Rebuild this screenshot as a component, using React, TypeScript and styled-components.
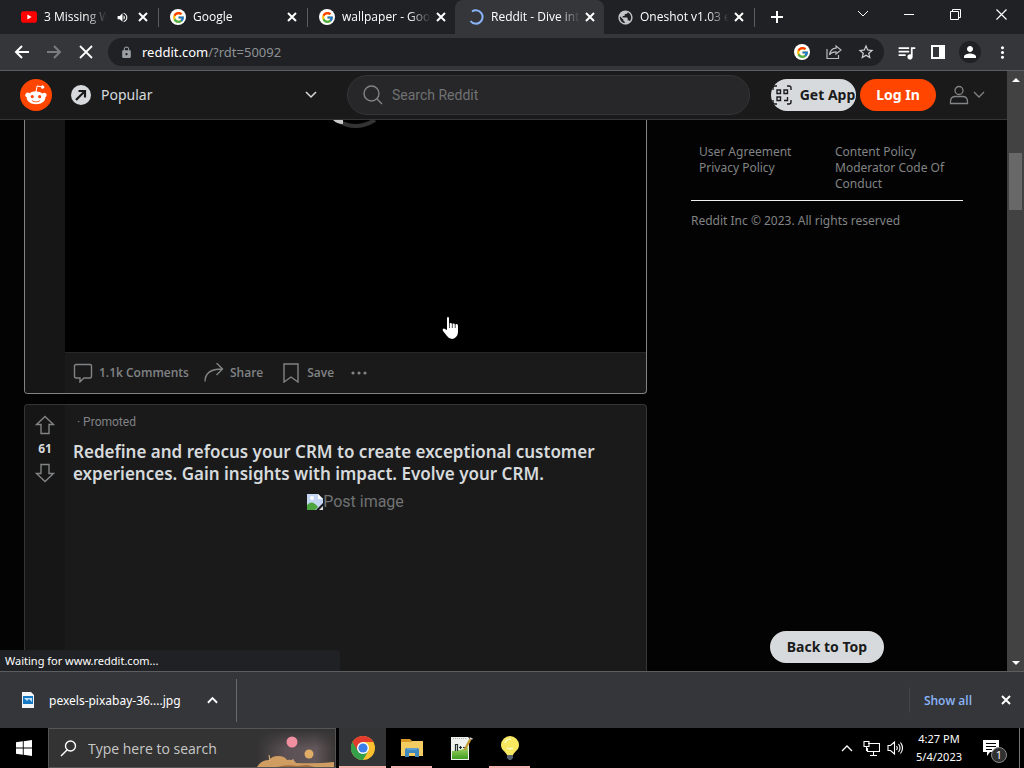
import React from "react";
import styled, { createGlobalStyle, css } from "styled-components";
import { FcGoogle } from "react-icons/fc";
import { MdLock, MdVolumeUp, MdPublic, MdPerson, MdMoreVert, MdQueueMusic, MdStarBorder } from "react-icons/md";

const uiFont = '"Open Sans", "Noto Sans", sans-serif';
const redditFont = '"Noto Sans", "Open Sans", sans-serif';
const plexFont = 'Roboto, "Noto Sans", sans-serif';

const GlobalStyle = createGlobalStyle`
  *, *::before, *::after { box-sizing: border-box; }
  body { margin: 0; background: #000; font-family: ${uiFont}; color: #fff; }
  button { font: inherit; color: inherit; border: 0; padding: 0; margin: 0; background: none; cursor: pointer; }
  a { color: inherit; text-decoration: none; }
  h2, p, ul { margin: 0; padding: 0; }
  svg { display: block; flex: none; }
`;

const Desktop = styled.div`
  display: flex;
  flex-direction: column;
  height: 100vh;
  overflow: hidden;
`;

/* ---------- browser tabs ---------- */
const TabStrip = styled.header`
  display: flex;
  align-items: stretch;
  height: 34px;
  padding-left: 8px;
  background: #202124;
  flex: none;
`;

const Tab = styled.div<{ $active?: boolean; $divided?: boolean }>`
  position: relative;
  display: flex;
  align-items: center;
  width: 149px;
  padding: 0 6px 0 13px;
  font-size: 12px;
  ${(p) =>
    p.$active &&
    css`
      background: #35363a;
      border-radius: 8px 8px 0 0;
    `}
  ${(p) =>
    p.$divided &&
    css`
      &::after {
        content: "";
        position: absolute;
        right: -2px;
        top: 8px;
        width: 1px;
        height: 19px;
        background: #5a5c60;
      }
    `}
`;

const TabIcon = styled.span<{ $tint: string }>`
  display: flex;
  align-items: center;
  justify-content: center;
  width: 16px;
  color: ${(p) => p.$tint};
  flex: none;
`;

const TabTitle = styled.span`
  flex: 1;
  min-width: 0;
  margin: 0 0 0 7px;
  line-height: 18px;
  overflow: hidden;
  white-space: nowrap;
  mask-image: linear-gradient(to right, #000 calc(100% - 24px), transparent calc(100% - 2px));
`;

const IconButton = styled.button<{ $w?: number; $color?: string }>`
  display: flex;
  align-items: center;
  justify-content: center;
  width: ${(p) => p.$w ?? 16}px;
  color: ${(p) => p.$color ?? "#fff"};
  flex: none;
`;

const RoundIcon = styled.span`
  display: flex;
  align-items: center;
  justify-content: center;
  width: 16px;
  height: 16px;
  border-radius: 50%;
  background: #fff;
  flex: none;
`;

const WindowButtons = styled.div`
  display: flex;
  height: 28px;
  margin-left: auto;
`;

/* ---------- toolbar ---------- */
const Toolbar = styled.nav`
  display: flex;
  align-items: center;
  height: 37px;
  padding: 0 6px;
  background: #35363a;
  border-bottom: 1px solid #5c5d60;
  flex: none;
`;

const AddressBar = styled.div`
  display: flex;
  align-items: center;
  flex: 1;
  height: 28px;
  margin: 0 6px;
  padding: 0 2px 0 12px;
  border-radius: 14px;
  background: #202124;
  color: #9aa0a6;
`;

const AddressText = styled.div`
  flex: 1;
  margin-left: 9px;
  font-family: ${redditFont};
  font-size: 13px;
  line-height: 20px;
  color: #8d9196;
  b { font-weight: 400; color: #fff; }
`;

const Avatar = styled.span`
  display: flex;
  align-items: center;
  justify-content: center;
  width: 22px;
  height: 22px;
  border-radius: 50%;
  background: #202124;
`;

/* ---------- page ---------- */
const Viewport = styled.div`
  position: relative;
  display: flex;
  flex: 1;
  min-height: 0;
`;

const Page = styled.div`
  display: flex;
  flex-direction: column;
  flex: 1;
  min-width: 0;
  background: #030303;
`;

const SiteHeader = styled.header`
  display: flex;
  align-items: center;
  height: 49px;
  padding: 0 22px 0 20px;
  background: #1a1a1b;
  border-bottom: 1px solid #343536;
  flex: none;
  font-family: ${redditFont};
`;

const Community = styled.button`
  display: flex;
  align-items: center;
  width: 246px;
  margin-left: 19px;
  color: #d7dadc;
  font-family: ${redditFont};
  font-size: 14px;
  line-height: 20px;
  svg:last-child { margin-left: auto; }
  span { margin-left: 10px; }
`;

const SearchBox = styled.label`
  display: flex;
  align-items: center;
  flex: 1;
  height: 40px;
  margin: 0 21px 0 30px;
  padding-left: 15px;
  border: 1px solid #343536;
  border-radius: 20px;
  background: #272729;
  color: #818384;
`;

const SearchInput = styled.input`
  flex: 1;
  min-width: 0;
  margin-left: 9px;
  padding: 0;
  border: 0;
  outline: 0;
  background: none;
  color: #d7dadc;
  font-family: ${plexFont};
  font-size: 14px;
  &::placeholder { color: #707273; opacity: 1; }
`;

const Pill = styled.button<{ $accent?: boolean; $w: number }>`
  display: flex;
  align-items: center;
  justify-content: center;
  gap: 8px;
  width: ${(p) => p.$w}px;
  height: 32px;
  border-radius: 16px;
  background: ${(p) => (p.$accent ? "#ff4500" : "#d7dadc")};
  color: ${(p) => (p.$accent ? "#fff" : "#1a1a1b")};
  font-family: ${redditFont};
  font-size: 14px;
  font-weight: 700;
  line-height: 18px;
  white-space: nowrap;
  flex: none;
`;

const HeaderButtons = styled.div`
  display: flex;
  gap: 4px;
`;

const UserMenu = styled.button`
  display: flex;
  align-items: center;
  gap: 4px;
  margin-left: 13px;
  color: #818384;
`;

const Columns = styled.div`
  display: flex;
  flex: 1;
  min-height: 0;
  padding: 0 44px 0 24px;
  gap: 44px;
`;

const Feed = styled.main`
  display: flex;
  flex-direction: column;
  flex: 1;
  min-width: 0;
  gap: 10px;
  overflow: hidden;
`;

const Post = styled.article<{ $hovered?: boolean }>`
  display: flex;
  border: 1px solid ${(p) => (p.$hovered ? "#818384" : "#343536")};
  background: #1a1a1b;
  overflow: hidden;
  ${(p) =>
    p.$hovered
      ? css`
          border-top: 0;
          border-radius: 0 0 4px 4px;
          flex: none;
        `
      : css`
          border-bottom: 0;
          border-radius: 4px 4px 0 0;
          flex: 1;
        `}
`;

const VoteRail = styled.div`
  display: flex;
  flex-direction: column;
  align-items: center;
  gap: 4px;
  width: 40px;
  padding-top: 10px;
  background: #161617;
  color: #818384;
  flex: none;
`;

const Score = styled.span`
  color: #d7dadc;
  font-family: ${redditFont};
  font-size: 12px;
  font-weight: 700;
  line-height: 20px;
`;

const PostBody = styled.div`
  flex: 1;
  min-width: 0;
`;

const Media = styled.div`
  height: 232px;
  padding-left: 264px;
  background: #000;
`;

const Actions = styled.div`
  display: flex;
  align-items: center;
  height: 41px;
  padding-left: 8px;
  border-top: 1px solid #272729;
  color: #818384;
`;

const Action = styled.button<{ $gap?: number }>`
  display: flex;
  align-items: center;
  gap: 6px;
  margin-right: ${(p) => p.$gap ?? 0}px;
  font-family: ${uiFont};
  font-size: 12px;
  font-weight: 600;
  line-height: 16px;
`;

const Promoted = styled.p`
  padding: 9px 12px 0;
  color: #818384;
  font-family: ${plexFont};
  font-size: 12px;
  line-height: 16px;
`;

const PostTitle = styled.h2`
  padding: 11px 8px 0;
  color: #d7dadc;
  font-family: ${redditFont};
  font-size: 17px;
  font-weight: 600;
  line-height: 22px;
`;

const BrokenImage = styled.div`
  display: flex;
  justify-content: center;
  align-items: center;
  padding-top: 8px;
  color: #707273;
  font-family: ${plexFont};
  font-size: 16px;
  line-height: 18px;
`;

const Aside = styled.aside`
  display: flex;
  flex-direction: column;
  width: 272px;
  padding: 24px 0 8px;
  color: #818384;
  font-family: ${redditFont};
  font-size: 12px;
  line-height: 16px;
  flex: none;
`;

const Policies = styled.div`
  display: grid;
  grid-template-columns: 1fr 1fr;
  padding: 0 0 8px 8px;
  column-gap: 8px;
  border-bottom: 1px solid #edeff1;
  a { display: block; }
`;

const Copyright = styled.p`
  margin-top: 12px;
`;

const TopSlot = styled.div`
  align-self: center;
  margin-top: auto;
`;

const Scrollbar = styled.div`
  display: flex;
  flex-direction: column;
  align-items: center;
  width: 17px;
  background: #424242;
  flex: none;
`;

const Thumb = styled.div`
  width: 13px;
  height: 57px;
  margin-top: 65px;
  background: #686868;
`;

const ScrollArrow = styled.button<{ $end?: boolean }>`
  display: flex;
  align-items: center;
  justify-content: center;
  width: 17px;
  height: 17px;
  margin-top: ${(p) => (p.$end ? "auto" : "0")};
`;

const StatusBubble = styled.div`
  position: absolute;
  left: 0;
  bottom: 0;
  width: 340px;
  height: 21px;
  padding-left: 5px;
  border-top-right-radius: 4px;
  background: #202124;
  font-family: ${redditFont};
  font-size: 11px;
  line-height: 21px;
`;

const Pointer = styled.svg`
  position: absolute;
  left: 442px;
  top: 245px;
`;

/* ---------- downloads ---------- */
const Downloads = styled.section`
  display: flex;
  align-items: center;
  height: 57px;
  padding: 0 10px 0 20px;
  border-top: 1px solid #5c5d60;
  background: #35363a;
  flex: none;
`;

const FileItem = styled.div`
  display: flex;
  align-items: center;
  height: 43px;
  width: 217px;
  padding-right: 16px;
  border-right: 1px solid #68696c;
  a {
    margin-left: 13px;
    font-family: ${redditFont};
    font-size: 12px;
  }
  button { margin-left: auto; }
`;

const ShowAll = styled.a`
  display: flex;
  align-items: center;
  height: 26px;
  margin-left: auto;
  padding: 0 26px 0 14px;
  border-left: 1px solid #434448;
  color: #8ab4f8;
  font-size: 12px;
  font-weight: 600;
`;

/* ---------- taskbar ---------- */
const Taskbar = styled.footer`
  display: flex;
  height: 40px;
  background: #000;
  flex: none;
`;

const TaskSearch = styled.label`
  display: flex;
  align-items: center;
  width: 288px;
  padding-left: 11px;
  border: 1px solid #545454;
  background: #333;
  overflow: hidden;
`;

const TaskInput = styled.input`
  flex: 1;
  min-width: 0;
  margin-left: 11px;
  padding: 0;
  border: 0;
  outline: 0;
  background: none;
  color: #fff;
  font-family: ${uiFont};
  font-size: 14px;
  &::placeholder { color: #c8c8c8; opacity: 1; }
`;

const TaskApps = styled.div`
  display: flex;
  gap: 2px;
  margin-left: 3px;
`;

const TaskButton = styled.button<{ $active?: boolean; $open?: boolean }>`
  display: flex;
  align-items: center;
  justify-content: center;
  position: relative;
  width: 47px;
  background: ${(p) => (p.$active ? "#333436" : "none")};
  &::after {
    content: "";
    position: absolute;
    bottom: 0;
    left: ${(p) => (p.$active ? 0 : 3)}px;
    right: ${(p) => (p.$active ? 0 : 3)}px;
    height: 2px;
    background: ${(p) => (p.$active || p.$open ? "#f4b0ae" : "none")};
  }
`;

const Tray = styled.div`
  display: flex;
  align-items: center;
  margin-left: auto;
  padding-right: 4px;
`;

const Clock = styled.time`
  width: 58px;
  margin: 0 15px 0 3px;
  text-align: center;
  font-family: ${redditFont};
  font-size: 11px;
  line-height: 18px;
`;

const Notice = styled.button`
  position: relative;
  width: 28px;
  height: 40px;
  margin-right: 8px;
  svg { position: absolute; left: 0; top: 12px; }
`;

const NoticeCount = styled.span`
  position: absolute;
  left: 8px;
  top: 19px;
  width: 16px;
  height: 16px;
  border: 1px solid #888;
  border-radius: 50%;
  background: #303030;
  font-size: 11px;
  line-height: 14px;
`;

const DesktopEdge = styled.div`
  width: 1px;
  height: 40px;
  background: #777;
`;

/* ---------- icons ---------- */
type StrokeProps = { d?: string; w?: number; h?: number; box?: string; sw?: number; children?: React.ReactNode };
const Stroke = ({ d, w = 16, h = w, box, sw = 1, children }: StrokeProps) => (
  <svg width={w} height={h} viewBox={box ?? `0 0 ${w} ${h}`} fill="none" stroke="currentColor" strokeWidth={sw} aria-hidden="true">
    {d && <path d={d} />}
    {children}
  </svg>
);

const Close = () => <Stroke w={10} sw={2} d="M1 1l8 8M9 1L1 9" />;
const Chevron = ({ w = 12, up = false, sw = 1.3 }: { w?: number; up?: boolean; sw?: number }) => (
  <Stroke w={w} h={8} box="0 0 12 8" sw={sw} d={up ? "M1 7l5-5 5 5" : "M1 1l5 5 5-5"} />
);
const GoogleIcon = () => (
  <RoundIcon>
    <FcGoogle size={13} />
  </RoundIcon>
);

const YouTube = () => (
  <svg width="16" height="16" viewBox="0 0 16 16">
    <rect y="2.300" width="16" height="11.400" rx="2.800" fill="#f00" />
    <path d="M6.400 5.600v4.800L10.600 8z" fill="#fff" />
  </svg>
);

const Snoo = () => (
  <svg width="32" height="32" viewBox="0 0 20 20">
    <circle cx="10" cy="10" r="10" fill="#ff4500" />
    <path
      fill="#fff"
      d="M16.670 10a1.460 1.460 0 0 0-2.470-1 7.120 7.120 0 0 0-3.850-1.230l.65-3.080 2.130.45a1 1 0 1 0 .13-.61L10.820 4a.31.31 0 0 0-.37.240l-.74 3.470a7.140 7.140 0 0 0-3.900 1.230 1.460 1.460 0 1 0-1.610 2.390 2.870 2.870 0 0 0 0 .44c0 2.240 2.610 4.060 5.830 4.060s5.830-1.820 5.830-4.060a2.870 2.870 0 0 0 0-.44A1.460 1.460 0 0 0 16.670 10zM6.650 11a1 1 0 1 1 1 1 1 1 0 0 1-1-1zm5.810 2.750a3.840 3.840 0 0 1-2.470.77 3.840 3.840 0 0 1-2.470-.77.27.27 0 0 1 .38-.38A3.270 3.270 0 0 0 10 14a3.280 3.280 0 0 0 2.090-.61.270.270 0 1 1 .39.4zm-.18-1.710a1 1 0 1 1 1-1 1 1 0 0 1-1 1.040z"
    />
  </svg>
);

const VoteArrow = ({ down = false }: { down?: boolean }) => (
  <Stroke w={20} sw={1.4} d={down ? "M10 18.500L1.500 10.500h4.500V1.500h8v9h4.500z" : "M10 1.500l8.500 8h-4.500v9H6v-9H1.500z"} />
);

const ChromeLogo = () => (
  <svg width="24" height="24" viewBox="0 0 24 24">
    <circle cx="12" cy="12" r="12" fill="#fbc02d" />
    <path d="M12 12L1.600 6A12 12 0 0 0 12 24l5.200-9z" fill="#34a04a" />
    <path d="M1.600 6A12 12 0 0 1 22.400 6H12l-5.200 9z" fill="#e33b2e" />
    <circle cx="12" cy="12" r="6" fill="#fff" />
    <circle cx="12" cy="12" r="4.600" fill="#3b7de9" />
  </svg>
);

const Folder = () => (
  <svg width="22" height="20" viewBox="0 0 22 20">
    <path d="M0 1h9l2 2h11v15H0z" fill="#d99a26" />
    <path d="M0 4h10l2-1h10v15H0z" fill="#f3cc62" />
    <path d="M4 19v-7q0-2 2-2h10q2 0 2 2v7h-4v-4H8v4z" fill="#3f88c0" />
    <path d="M6 10h10v2H6z" fill="#5c9fd2" />
  </svg>
);

const NotepadPlus = () => (
  <svg width="24" height="24" viewBox="0 0 24 24">
    <defs>
      <linearGradient id="leaf" x1="0" x2="0" y1="0" y2="1">
        <stop offset="0" stopColor="#a8d86a" />
        <stop offset="1" stopColor="#3e9c22" />
      </linearGradient>
    </defs>
    <path d="M2 1h17l1 1v22H2z" fill="#eef1ec" />
    <path d="M3 15q8 0 16-4v12H3z" fill="url(#leaf)" />
    <path d="M4 2.500h14" stroke="#aab0aa" strokeDasharray="1 1" />
    <path d="M6.500 8v7M6.500 8.500h2V15M10 11.500h3M11.500 10v3M14 11.500h3" stroke="#23302b" strokeWidth="1.200" fill="none" />
    <path d="M21.500 3L15.500 14" stroke="#c39a35" strokeWidth="2.400" />
    <path d="M20.500 2l3 1" stroke="#ccc" strokeWidth="1.500" />
  </svg>
);

const Bulb = () => (
  <svg width="20" height="26" viewBox="0 0 20 26">
    <path d="M10 1a9 9 0 0 0-9 9c0 5 4.500 6.500 6 10h6c1.500-3.500 6-5 6-10a9 9 0 0 0-9-9z" fill="#f8e860" />
    <path d="M5 8q1-4 6-4M7 13l3 1 3-1" fill="none" stroke="#fffac0" strokeWidth="1.500" />
    <path d="M7 20h6v3l-2 2H9l-2-2z" fill="#55606f" />
  </svg>
);

const DesertArt = () => (
  <svg width="78" height="38" viewBox="0 0 78 38" aria-hidden="true">
    <defs>
      <linearGradient id="dusk" x1="0" x2="1">
        <stop offset="0" stopColor="#333" />
        <stop offset=".35" stopColor="#5a4f52" />
        <stop offset=".75" stopColor="#62575a" />
        <stop offset="1" stopColor="#3b3636" />
      </linearGradient>
      <linearGradient id="shade" x1="0" x2="0" y1="0" y2="1">
        <stop offset="0" stopColor="#333" />
        <stop offset=".5" stopColor="#333" stopOpacity="0" />
      </linearGradient>
    </defs>
    <path d="M0 0h78v38H0z" fill="url(#dusk)" />
    <path d="M0 0h78v38H0z" fill="url(#shade)" />
    <circle cx="35" cy="13" r="5.500" fill="#f08fa0" />
    <circle cx="52" cy="25" r="4.500" fill="#e0ad68" />
    <path d="M0 38q4-7 12-7 3-4 9-4 7 0 9 4 7-1 9 3 20 1 38-1v5z" fill="#cf9c62" />
    <path d="M20 38q9-3 20-1l10-1 8 2z" fill="#a06c40" />
    <path d="M13 32l-1-6M36 33v-3" stroke="#e0b880" fill="none" />
  </svg>
);

const tabs = [
  { title: "3 Missing Win", icon: <YouTube />, audio: true, divided: true },
  { title: "Google", icon: <GoogleIcon />, divided: true },
  { title: "wallpaper - Goog", icon: <GoogleIcon /> },
  { title: "Reddit - Dive into", icon: <Stroke w={16} sw={2} d="M4 2.500A6.700 6.700 0 1 1 2.500 12" />, active: true },
  { title: "Oneshot v1.03 e", icon: <MdPublic size={17} color="#c3c6c9" />, divided: true },
];

export default function App() {
  return (
    <Desktop>
      <GlobalStyle />
      <TabStrip>
        {tabs.map((t) => (
          <Tab key={t.title} $active={t.active} $divided={t.divided}>
            <TabIcon $tint={t.active ? "#8ab4f8" : "#fff"}>{t.icon}</TabIcon>
            <TabTitle>{t.title}</TabTitle>
            {t.audio && (
              <IconButton $w={26} aria-label="Mute tab">
                <MdVolumeUp size={13} />
              </IconButton>
            )}
            <IconButton aria-label="Close tab">
              <Close />
            </IconButton>
          </Tab>
        ))}
        <IconButton $w={47} aria-label="New tab">
          <Stroke w={12} sw={2} d="M6 0v12M0 6h12" />
        </IconButton>
        <WindowButtons>
          <IconButton $w={46} aria-label="Search tabs"><Chevron sw={1} /></IconButton>
          <IconButton $w={46} aria-label="Minimize"><Stroke w={10} sw={1} d="M0 5.500h10" /></IconButton>
          <IconButton $w={46} aria-label="Restore"><Stroke w={11} sw={1} d="M.5 2.500h8v8h-8zM2.500 2.500v-2h8v8h-2" /></IconButton>
          <IconButton $w={46} aria-label="Close"><Stroke w={11} sw={1.2} d="M.5.5l10 10M10.500.5l-10 10" /></IconButton>
        </WindowButtons>
      </TabStrip>

      <Toolbar>
        <IconButton $w={32} aria-label="Back"><Stroke w={16} sw={2} d="M15 8H2M8 2L2 8l6 6" /></IconButton>
        <IconButton $w={32} $color="#7b7c7f" aria-label="Forward"><Stroke w={16} sw={2} d="M1 8h13M8 2l6 6-6 6" /></IconButton>
        <IconButton $w={32} aria-label="Stop"><Stroke w={14} sw={1.8} d="M1 1l12 12M13 1L1 13" /></IconButton>
        <AddressBar>
          <MdLock size={13} />
          <AddressText><b>reddit.com</b>/?rdt=50092</AddressText>
          <IconButton $w={32} aria-label="Google"><GoogleIcon /></IconButton>
          <IconButton $w={32} $color="#b9bbbe" aria-label="Share">
            <Stroke w={16} sw={1.2} d="M1 5v9.500h11.500V11M10 2l5 4-5 4V7.800c-3 0-5 .8-6.500 3C4 7.500 6 4.500 10 4.200z" />
          </IconButton>
          <IconButton $w={32} $color="#d0d2d4" aria-label="Bookmark"><MdStarBorder size={18} /></IconButton>
        </AddressBar>
        <IconButton $w={32} aria-label="Media controls"><MdQueueMusic size={21} /></IconButton>
        <IconButton $w={32} aria-label="Side panel"><Stroke w={14} sw={2} d="M1 1h12v12H1z"><path d="M8 1h5v12H8z" fill="currentColor" stroke="none" /></Stroke></IconButton>
        <IconButton $w={32} aria-label="Profile"><Avatar><MdPerson size={18} /></Avatar></IconButton>
        <IconButton $w={32} aria-label="Menu"><MdMoreVert size={19} /></IconButton>
      </Toolbar>

      <Viewport>
        <Page>
          <SiteHeader>
            <a href="#home" aria-label="Reddit home"><Snoo /></a>
            <Community>
              <svg width="20" height="20" viewBox="0 0 20 20">
                <circle cx="10" cy="10" r="10" fill="#d7dadc" />
                <path d="M5 15l8-8M7.500 6H14v6.500" stroke="#1a1a1b" strokeWidth="2.200" fill="none" />
              </svg>
              <span>Popular</span>
              <Chevron sw={1.5} />
            </Community>
            <SearchBox>
              <Stroke w={20} sw={1.4}><circle cx="8.500" cy="8.500" r="7.500" /><path d="M14 14l5 5" /></Stroke>
              <SearchInput aria-label="Search Reddit" placeholder="Search Reddit" />
            </SearchBox>
            <HeaderButtons>
              <Pill $w={85}>
                <Stroke w={20} sw={1.4} d="M1 5V3q0-2 2-2h2M15 1h2q2 0 2 2v2M19 15v2q0 2-2 2h-2M5 19H3q-2 0-2-2v-2M5 5h3.500v3.500H5zM12 5h3.500v3.500H12zM5 12h3.500v3.500H5zM12 15.500h3.500V12" />
                Get App
              </Pill>
              <Pill $accent $w={76}>Log In</Pill>
            </HeaderButtons>
            <UserMenu aria-label="User menu">
              <Stroke w={20} sw={1.3}><circle cx="10" cy="5.500" r="4" /><path d="M1.500 18.500v-2q0-5 5-5h7q5 0 5 5v2z" /></Stroke>
              <Chevron />
            </UserMenu>
          </SiteHeader>

          <Columns>
            <Feed>
              <Post $hovered>
                <VoteRail />
                <PostBody>
                  <Media>
                    <svg width="56" height="10" viewBox="0 0 56 10" fill="none">
                      <path d="M8 0Q26 12 46 0" stroke="#333" strokeWidth="4" />
                      <path d="M4 0h10v4q-6 0-10-4z" fill="#ccc" />
                    </svg>
                  </Media>
                  <Actions>
                    <Action $gap={15}>
                      <Stroke w={20} sw={1.4} d="M3 1.500h14q1.500 0 1.500 1.500v10q0 2-1.500 2h-6L7 18.800V15H3q-1.500 0-1.500-2V3q0-1.500 1.500-1.500z" />
                      1.1k Comments
                    </Action>
                    <Action $gap={18}>
                      <Stroke w={20} sw={1.4} d="M1 18.500C1 11 6 6 18 6M12.500 0L18.500 6l-6 6" />
                      Share
                    </Action>
                    <Action $gap={15}>
                      <Stroke w={20} sw={1.4} d="M3 1h14v18l-7-5-7 5z" />
                      Save
                    </Action>
                    <Action aria-label="More options">
                      <svg width="20" height="20" viewBox="0 0 20 20" fill="currentColor"><circle cx="4" cy="10" r="1.600" /><circle cx="10" cy="10" r="1.600" /><circle cx="16" cy="10" r="1.600" /></svg>
                    </Action>
                  </Actions>
                </PostBody>
              </Post>
              <Post>
                <VoteRail>
                  <IconButton $w={24} $color="#818384" aria-label="Upvote"><VoteArrow /></IconButton>
                  <Score>61</Score>
                  <IconButton $w={24} $color="#818384" aria-label="Downvote"><VoteArrow down /></IconButton>
                </VoteRail>
                <PostBody>
                  <Promoted>· Promoted</Promoted>
                  <PostTitle>Redefine and refocus your CRM to create exceptional customer experiences. Gain insights with impact. Evolve your CRM.</PostTitle>
                  <BrokenImage>
                    <svg width="16" height="16" viewBox="0 0 16 16">
                      <path d="M0 0h11l5 5v4L9 16H0z" fill="#c5d6f3" />
                      <path d="M0 11q5-6 11 2l-3 3H0z" fill="#4da33c" />
                      <path d="M11 0v5h5z" fill="#fff" />
                      <path d="M16 12v4h-4z" fill="#ddd" />
                      <circle cx="5" cy="4" r="2" fill="#fff" />
                    </svg>
                    Post image
                  </BrokenImage>
                </PostBody>
              </Post>
            </Feed>
            <Aside>
              <Policies>
                <div>
                  <a href="#agreement">User Agreement</a>
                  <a href="#privacy">Privacy Policy</a>
                </div>
                <div>
                  <a href="#content">Content Policy</a>
                  <a href="#moderators">Moderator Code Of Conduct</a>
                </div>
              </Policies>
              <Copyright>Reddit Inc © 2023. All rights reserved</Copyright>
              <TopSlot><Pill $w={114}>Back to Top</Pill></TopSlot>
            </Aside>
          </Columns>
        </Page>
        <Scrollbar>
          <ScrollArrow aria-label="Scroll up"><svg width="8" height="4" viewBox="0 0 8 4"><path d="M0 4l4-4 4 4z" fill="#fff" /></svg></ScrollArrow>
          <Thumb />
          <ScrollArrow $end aria-label="Scroll down"><svg width="8" height="4" viewBox="0 0 8 4"><path d="M0 0l4 4 4-4z" fill="#fff" /></svg></ScrollArrow>
        </Scrollbar>
        <StatusBubble>Waiting for www.reddit.com...</StatusBubble>
        <Pointer width="18" height="24" viewBox="0 0 18 24" aria-hidden="true">
          <path d="M5 2q0-1 1-1t1 1v6q0-1 1.500-1T10 8v.5q0-1 1.500-1T13 8.500V9q0-1 1.500-1T16 9.500V16q0 3-2 5-2 2-4 2-3 0-5-3l-4-5q-1-2 1-2.500L5 14z" fill="#fff" />
          <path d="M7.500 7v5M10.300 7.500V12M13.200 8v4" stroke="#222" strokeWidth=".8" />
        </Pointer>
      </Viewport>

      <Downloads>
        <FileItem>
          <svg width="16" height="18" viewBox="0 0 16 18">
            <path d="M2 1h9l3 3v13H2z" fill="#f4f6f8" />
            <path d="M3 5h10v8H3z" fill="#1779c4" />
            <path d="M4 7l3 3 2-2 3 3V7z" fill="#bfe0f7" />
          </svg>
          <a href="#file">pexels-pixabay-36....jpg</a>
          <IconButton $w={16} aria-label="File menu"><Chevron w={11} up sw={2} /></IconButton>
        </FileItem>
        <ShowAll href="#downloads">Show all</ShowAll>
        <IconButton aria-label="Close downloads"><Close /></IconButton>
      </Downloads>

      <Taskbar>
        <IconButton $w={48} aria-label="Start">
          <svg width="16" height="16" viewBox="0 0 16 16"><path d="M0 2.300l6.800-1V7.600H0zM7.700 1.200L16 0v7.600H7.700zM0 8.500h6.800v6.300l-6.800-1zM7.700 8.500H16V16l-8.300-1.200z" fill="#fff" /></svg>
        </IconButton>
        <TaskSearch>
          <Stroke w={17} sw={1.4}><circle cx="10.500" cy="6" r="5" /><path d="M7 10l-6 6" /></Stroke>
          <TaskInput aria-label="Search" placeholder="Type here to search" />
          <DesertArt />
        </TaskSearch>
        <TaskApps>
          <TaskButton $active aria-label="Chrome"><ChromeLogo /></TaskButton>
          <TaskButton $open aria-label="File Explorer"><Folder /></TaskButton>
          <TaskButton aria-label="Notepad++"><NotepadPlus /></TaskButton>
          <TaskButton $open aria-label="Ideas"><Bulb /></TaskButton>
        </TaskApps>
        <Tray>
          <IconButton $w={24} aria-label="Hidden icons"><Chevron up /></IconButton>
          <IconButton $w={24} aria-label="Network"><Stroke w={17} h={16} sw={1.1} d="M5 3.500h11.500v8H4.500V8M10.500 12v3M7 15.500h7M1 1.500h5v5H1zM3.500 7v4" /></IconButton>
          <IconButton $w={24} aria-label="Volume"><Stroke w={16} sw={1.1} d="M1 5.500h2.500l4-3.500v12l-4-3.500H1zM9.500 6q1.500 2 0 4M11.500 4q3 4 0 8M13.500 2.500q4 5.500 0 11" /></IconButton>
          <Clock>4:27 PM<br />5/4/2023</Clock>
          <Notice aria-label="Notifications">
            <svg width="16" height="16" viewBox="0 0 16 16"><path d="M0 0h16v12H7l-3 4v-4H0z" fill="#fff" /><path d="M3 3.500h10M3 6.500h10M3 9.500h6" stroke="#000" /></svg>
            <NoticeCount>1</NoticeCount>
          </Notice>
          <DesktopEdge />
        </Tray>
      </Taskbar>
    </Desktop>
  );
}
